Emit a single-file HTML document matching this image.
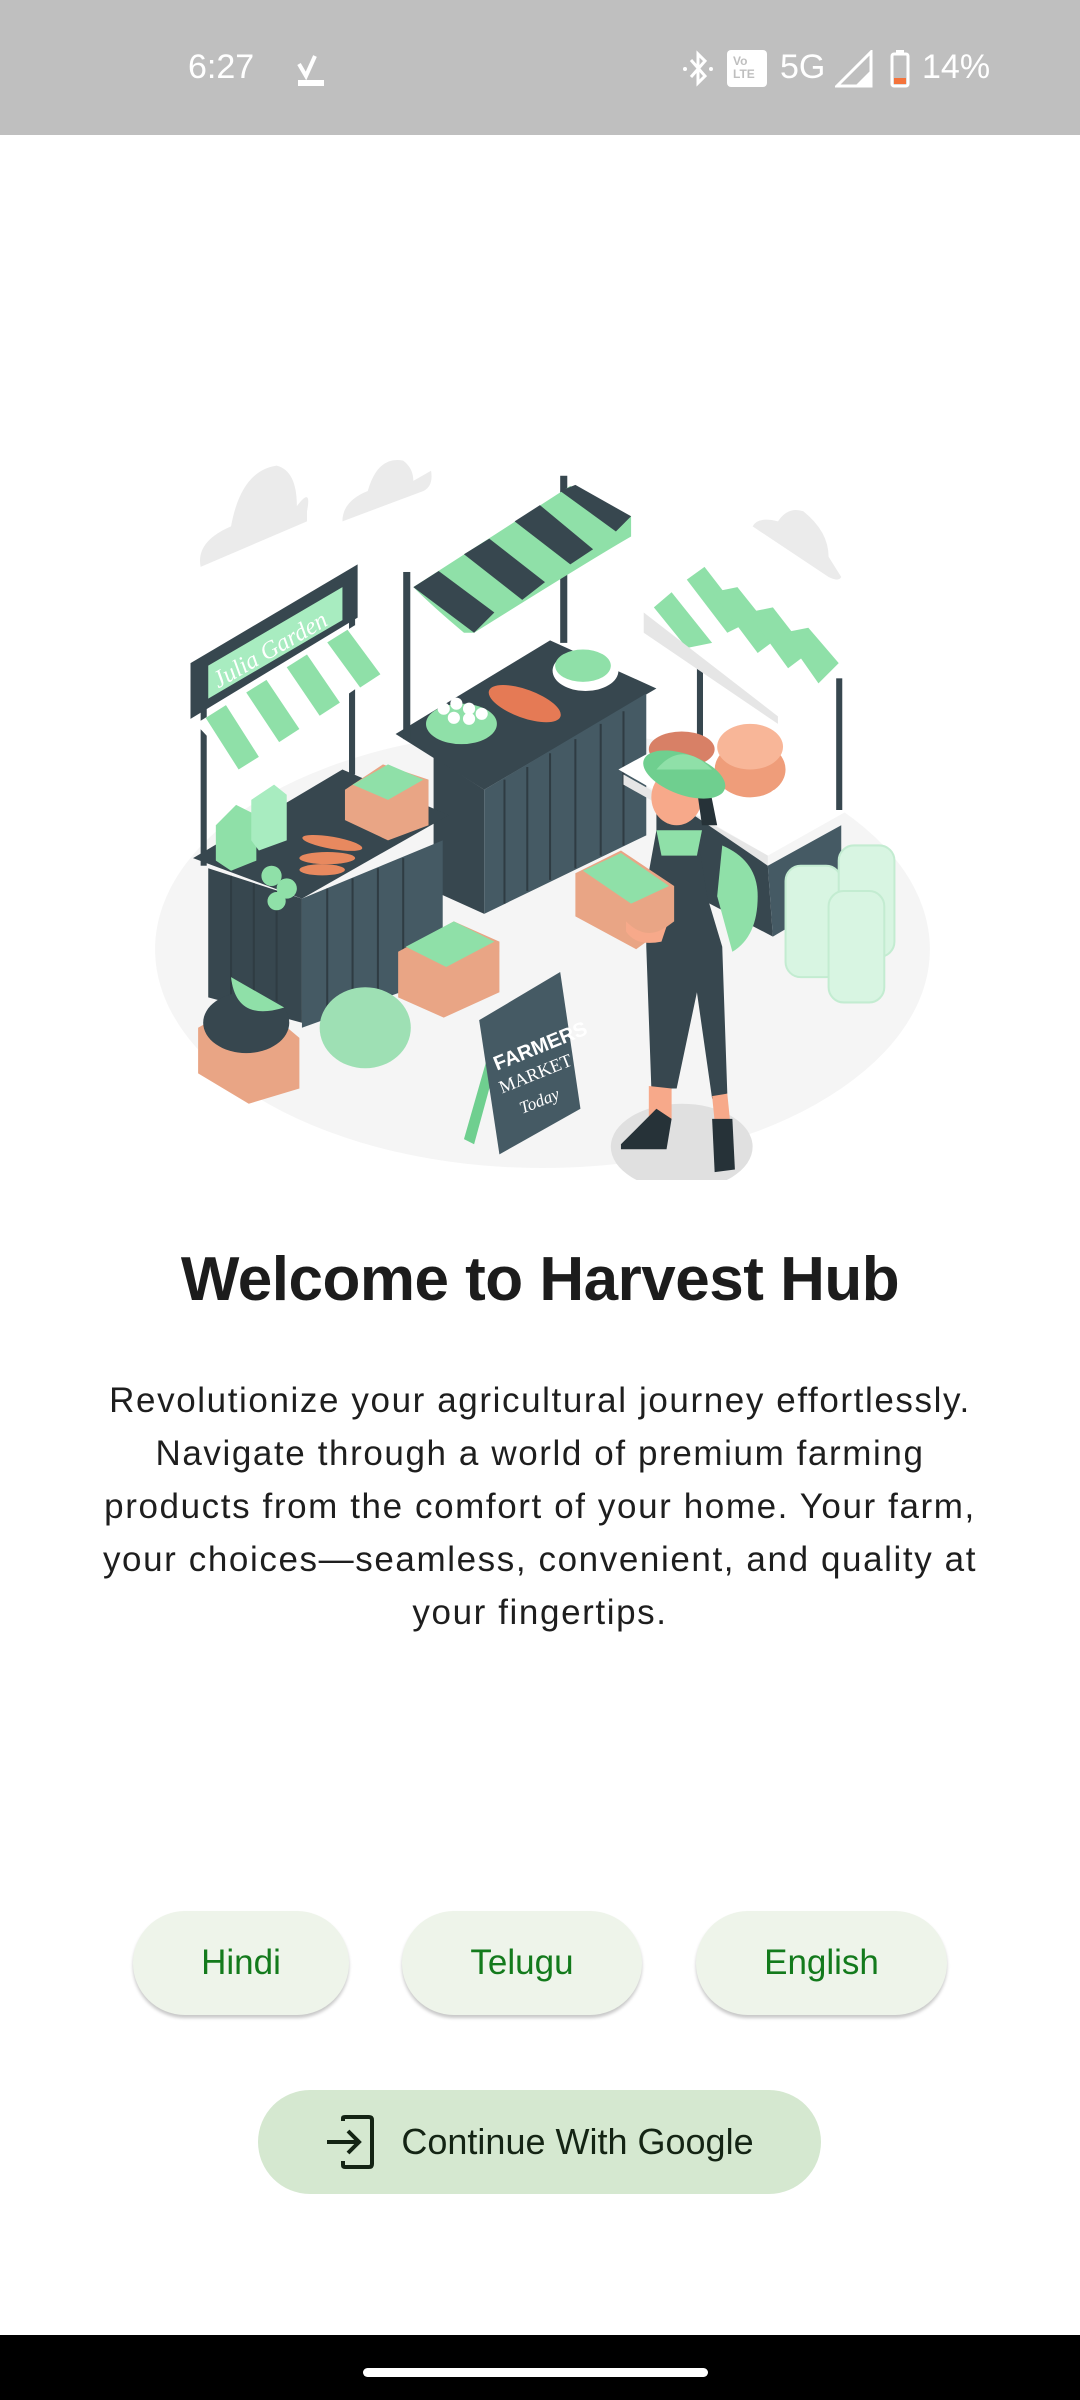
<!DOCTYPE html>
<html><head><meta charset="utf-8">
<style>
*{margin:0;padding:0;box-sizing:border-box}
body{width:1080px;height:2400px;background:#fff;position:relative;overflow:hidden;font-family:"Liberation Sans",sans-serif}
.sb{position:absolute;left:0;top:0;width:1080px;height:135px;background:#bfbfbf;color:#fff}
.sb .t{position:absolute;left:188px;top:48px;font-size:34px}
.nav{position:absolute;left:0;top:2335px;width:1080px;height:65px;background:#000}
.nav i{position:absolute;left:363px;top:33px;width:345px;height:9px;border-radius:5px;background:#fff}
h1{position:absolute;left:0;width:1080px;top:1244px;text-align:center;font-size:62px;font-weight:bold;color:#1c1c1c;letter-spacing:-0.5px}
.p{position:absolute;left:0;width:1080px;top:1374px;text-align:center;font-size:35px;line-height:53px;color:#1e1e1e;white-space:nowrap;letter-spacing:1.6px}
.pill{position:absolute;top:1911px;height:104px;border-radius:52px;background:#eef4ea;box-shadow:0 3px 3px rgba(0,0,0,.22);color:#137a1c;font-size:35px;display:flex;align-items:center;justify-content:center}
.g{position:absolute;left:258px;top:2090px;width:563px;height:104px;border-radius:52px;background:#d5e8d0;color:#142414;font-size:36px;display:flex;align-items:center;justify-content:center;gap:26px}
</style></head><body>
<div class="sb">
<span class="t">6:27</span>
<svg style="position:absolute;left:296px;top:52px" width="30" height="34" viewBox="0 0 30 34"><path d="M3 12 L10 24 L19 4" stroke="#fff" stroke-width="4" fill="none"/><rect x="2" y="28" width="26" height="6" fill="#fff"/></svg>
<svg style="position:absolute;left:682px;top:50px" width="32" height="38" viewBox="0 0 32 38"><path d="M9 10 L23 26 L16 33 L16 4 L23 11 L9 27" stroke="#fff" stroke-width="3" fill="none"/><circle cx="3" cy="19" r="2" fill="#fff"/><circle cx="29" cy="19" r="2" fill="#fff"/></svg>
<div style="position:absolute;left:727px;top:50px;width:40px;height:37px;background:#fff;border-radius:4px;color:#bfbfbf;font-size:12px;line-height:13px;padding:5px 0 0 6px;font-weight:bold">Vo<br>LTE</div>
<span style="position:absolute;left:780px;top:48px;font-size:34px">5G</span>
<svg style="position:absolute;left:835px;top:50px" width="38" height="38"><path d="M2 36 L36 2 L36 36 Z" fill="none" stroke="#fff" stroke-width="3"/><path d="M20 36 L36 20 L36 36Z" fill="#fff"/></svg>
<svg style="position:absolute;left:890px;top:50px" width="20" height="38"><rect x="6" y="0" width="8" height="4" fill="#fff"/><rect x="2" y="4" width="16" height="32" rx="2" fill="none" stroke="#fff" stroke-width="3"/><rect x="4" y="28" width="12" height="6" fill="#f4733b"/></svg>
<span style="position:absolute;left:922px;top:48px;font-size:34px">14%</span>
</div>

<svg style="position:absolute;left:150px;top:440px" width="790" height="740" viewBox="0 0 1560 1460">
<ellipse cx="775" cy="1005" rx="765" ry="432" fill="#f5f5f5"/>
<g fill="#ebebeb">
<path d="M100 250 Q90 200 160 170 Q180 60 250 50 Q290 60 290 130 Q320 90 310 140 L310 160 Z"/>
<path d="M380 160 Q380 120 430 100 Q450 30 500 40 Q520 55 520 80 L555 60 Q560 90 540 100 Z"/>
<path d="M1190 170 Q1200 150 1240 160 Q1260 130 1290 140 Q1340 180 1340 230 L1365 270 Q1360 280 1340 270 Z"/>
</g>
<path d="M485 580 L790 395 L1000 490 L660 690 Z" fill="#37474f"/>
<path d="M505 590 L660 690 L660 935 L560 890 L560 620Z" fill="#37474f"/>
<path d="M660 690 L980 500 L980 780 L660 935Z" fill="#455a64"/>
<g stroke="#2f3c43" stroke-width="4"><line x1="700" y1="670" x2="700" y2="915"/><line x1="745" y1="645" x2="745" y2="890"/><line x1="790" y1="618" x2="790" y2="868"/><line x1="840" y1="590" x2="840" y2="845"/><line x1="890" y1="560" x2="890" y2="820"/><line x1="935" y1="535" x2="935" y2="800"/></g>
<rect x="500" y="260" width="14" height="330" fill="#37474f"/>
<rect x="810" y="70" width="14" height="330" fill="#37474f"/>
<path d="M520 290 L830 90 L950 150 L950 190 Q880 230 640 380 L620 380 Q560 330 520 290Z" fill="#8fe0a8"/>
<g fill="#37474f"><path d="M520 290 L570 258 L680 340 L640 380Z"/><path d="M620 225 L670 194 L780 280 L735 315Z"/><path d="M720 160 L770 128 L875 215 L830 245Z"/><path d="M810 100 L840 88 L950 150 L920 180Z"/></g>
<ellipse cx="615" cy="560" rx="70" ry="40" fill="#8fe0a8"/>
<g fill="#fff"><circle cx="580" cy="530" r="12"/><circle cx="605" cy="520" r="12"/><circle cx="630" cy="530" r="12"/><circle cx="600" cy="548" r="12"/><circle cx="630" cy="550" r="12"/><circle cx="655" cy="540" r="12"/></g>
<ellipse cx="740" cy="520" rx="75" ry="28" fill="#e57a55" transform="rotate(20 740 520)"/>
<ellipse cx="860" cy="455" rx="65" ry="40" fill="#fff"/><ellipse cx="855" cy="445" rx="55" ry="32" fill="#8fe0a8"/>
<rect x="100" y="520" width="12" height="320" fill="#37474f"/>
<rect x="393" y="330" width="12" height="330" fill="#37474f"/>
<path d="M85 825 L380 650 L590 740 L300 905Z" fill="#37474f"/>
<path d="M115 845 L300 905 L300 1150 L115 1100Z" fill="#37474f"/>
<path d="M300 905 L578 790 L578 1060 L300 1160Z" fill="#455a64"/>
<g stroke="#2f3c43" stroke-width="4"><line x1="160" y1="860" x2="160" y2="1110"/><line x1="205" y1="875" x2="205" y2="1125"/><line x1="250" y1="890" x2="250" y2="1140"/><line x1="350" y1="885" x2="350" y2="1140"/><line x1="400" y1="865" x2="400" y2="1120"/><line x1="450" y1="845" x2="450" y2="1100"/><line x1="500" y1="825" x2="500" y2="1085"/></g>
<path d="M90 560 L405 365 L480 440 L175 650 Z" fill="#fff"/>
<g fill="#8fe0a8"><path d="M110 548 L150 523 L215 625 L175 650Z"/><path d="M190 498 L230 473 L295 570 L255 596Z"/><path d="M270 448 L310 423 L375 518 L335 544Z"/><path d="M350 399 L390 374 L455 462 L415 488Z"/></g>
<path d="M80 440 L410 245 L410 350 L80 550Z" fill="#37474f"/>
<path d="M115 445 L380 290 L380 355 L115 510Z" fill="#a8ecc0"/>
<text x="135" y="490" transform="rotate(-30 135 490)" font-family="Liberation Serif,serif" font-style="italic" font-size="48" fill="#fff">Julia Garden</text>
<path d="M130 760 L170 720 L210 740 L210 830 L160 850 L130 830Z" fill="#8fe0a8"/>
<path d="M200 710 L245 680 L270 700 L270 790 L215 810 L200 790Z" fill="#a8ecc0"/>
<g fill="#e8895f"><ellipse cx="360" cy="795" rx="60" ry="12" transform="rotate(10 360 795)"/><ellipse cx="350" cy="825" rx="55" ry="12"/><ellipse cx="340" cy="848" rx="45" ry="11"/></g>
<g fill="#8fe0a8"><circle cx="240" cy="860" r="20"/><circle cx="270" cy="885" r="20"/><circle cx="250" cy="910" r="18"/></g>
<path d="M385 690 L460 640 L550 670 L550 760 L470 790 L385 750Z" fill="#e9a585"/>
<path d="M400 680 L470 640 L540 670 L470 710Z" fill="#8fe0a8"/>
<path d="M925 650 L1090 560 L1380 730 L1220 820Z" fill="#fff"/>
<path d="M935 660 L1220 820 L1220 840 L935 680Z" fill="#e6e6e6"/>
<path d="M1000 690 L1220 840 L1230 980 L1000 860Z" fill="#37474f"/>
<path d="M1220 840 L1365 760 L1365 900 L1230 980Z" fill="#455a64"/>
<rect x="1080" y="440" width="12" height="200" fill="#37474f"/>
<rect x="1355" y="470" width="12" height="260" fill="#37474f"/>
<path d="M975 340 L1085 245 L1380 430 L1240 545Z" fill="#fff"/>
<g fill="#8fe0a8"><path d="M995 330 L1030 300 L1110 400 L1060 410Z"/><path d="M1060 275 L1095 250 L1180 360 L1140 380Z"/><path d="M1110 300 L1160 290 L1240 390 L1200 420Z"/><path d="M1180 340 L1230 330 L1300 420 L1260 450Z"/><path d="M1250 380 L1300 370 L1360 440 L1320 480Z"/></g>
<path d="M975 340 L1240 545 L1240 560 L975 380Z" fill="#e6e6e6"/>
<ellipse cx="1185" cy="650" rx="70" ry="55" fill="#ef9d7a"/><ellipse cx="1185" cy="605" rx="65" ry="45" fill="#f8b698"/>
<ellipse cx="1050" cy="610" rx="65" ry="35" fill="#d88066"/>
<g fill="#fff"><rect x="1225" y="690" width="28" height="90" rx="10"/><rect x="1258" y="670" width="28" height="90" rx="10"/><rect x="1290" y="650" width="28" height="90" rx="10"/></g>
<g fill="#d8f5e2" stroke="#c3ecd1" stroke-width="4"><rect x="1255" y="840" width="110" height="220" rx="30"/><rect x="1360" y="800" width="110" height="220" rx="30"/><rect x="1340" y="890" width="110" height="220" rx="30"/></g>
<path d="M490 1010 L600 950 L690 990 L690 1090 L580 1140 L490 1100Z" fill="#e9a585"/>
<path d="M505 1000 L600 950 L680 990 L585 1040Z" fill="#8fe0a8"/>
<path d="M95 1160 L200 1100 L295 1180 L295 1280 L195 1310 L95 1250Z" fill="#e9a585"/>
<ellipse cx="190" cy="1150" rx="85" ry="60" fill="#37474f"/>
<path d="M160 1060 Q170 1150 265 1120 Z" fill="#8fe0a8"/>
<ellipse cx="425" cy="1160" rx="90" ry="80" fill="#9ee0b4"/>
<path d="M620 1380 L680 1170 L700 1170 L640 1390Z" fill="#6fcf8f"/>
<path d="M650 1145 L810 1050 L850 1320 L690 1410Z" fill="#455a64"/>
<text transform="translate(685 1245) rotate(-22)" font-family="Liberation Sans,sans-serif" font-weight="bold" font-size="40" fill="#fff">FARMERS</text>
<text transform="translate(695 1290) rotate(-22)" font-family="Liberation Serif,serif" font-size="36" fill="#fff">MARKET</text>
<text transform="translate(735 1330) rotate(-22)" font-family="Liberation Serif,serif" font-style="italic" font-size="34" fill="#fff">Today</text>
<ellipse cx="1050" cy="1395" rx="140" ry="85" fill="#e0e0e0"/>
<path d="M1130 800 Q1200 830 1200 900 Q1200 980 1150 1010 L1120 900Z" fill="#8fe0a8"/>
<path d="M980 880 L1000 770 L1080 770 L1100 900 L1130 1000 L1140 1290 L1110 1300 L1080 1090 L1040 1280 L990 1280 L980 1000Z" fill="#37474f"/>
<path d="M1000 770 L1090 770 L1080 820 L1010 820Z" fill="#8fe0a8"/>
<path d="M985 1275 L1030 1280 L1030 1340 L985 1340Z" fill="#f7a98a"/>
<path d="M1110 1295 L1140 1290 L1145 1340 L1115 1345Z" fill="#f7a98a"/>
<path d="M930 1390 L1000 1320 L1030 1340 L1020 1400 L930 1400Z" fill="#263238"/>
<path d="M1110 1340 L1150 1340 L1155 1440 L1115 1445Z" fill="#263238"/>
<ellipse cx="1040" cy="705" rx="50" ry="55" fill="#f7a98a"/>
<path d="M990 660 Q1040 610 1100 660 L1120 760 L1090 760 L1080 690Z" fill="#263238"/>
<ellipse cx="1055" cy="660" rx="85" ry="40" fill="#6fcf8f" transform="rotate(20 1055 660)"/>
<path d="M1000 650 Q1050 590 1110 650Z" fill="#8fe0a8"/>
<path d="M840 855 L930 810 L1035 880 L1035 950 L960 1005 L840 940Z" fill="#e9a585"/>
<path d="M855 850 L930 815 L1025 880 L950 915Z" fill="#8fe0a8"/>
<path d="M940 950 Q980 990 1020 960 L1010 990 Q960 1000 940 970Z" fill="#f7a98a"/>
</svg>

<h1>Welcome to Harvest Hub</h1>
<div class="p">Revolutionize your agricultural journey effortlessly.<br>Navigate through a world of premium farming<br>products from the comfort of your home. Your farm,<br>your choices—seamless, convenient, and quality at<br>your fingertips.</div>

<div class="pill" style="left:133px;width:216px">Hindi</div>
<div class="pill" style="left:402px;width:240px">Telugu</div>
<div class="pill" style="left:696px;width:251px">English</div>
<div class="g"><svg width="50" height="54" viewBox="0 0 50 54"><path d="M18 6 L18 3 Q18 2 20 2 L44 2 Q47 2 47 5 L47 49 Q47 52 44 52 L20 52 Q18 52 18 50 L18 46" stroke="#142414" stroke-width="4" fill="none"/><path d="M2 27 L34 27 M23 16 L34 27 L23 38" stroke="#142414" stroke-width="4" fill="none"/></svg><span>Continue With Google</span></div>

<div class="nav"><i></i></div>
</body></html>
